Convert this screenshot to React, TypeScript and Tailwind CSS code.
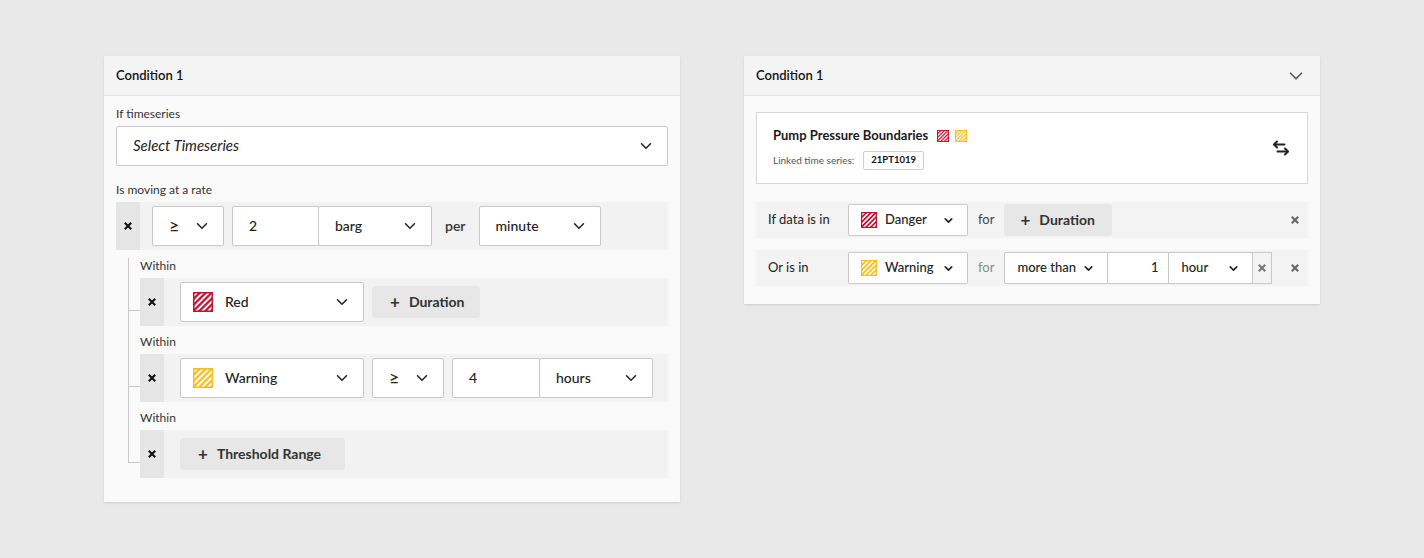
import { ChevronDown } from 'lucide-react';
import type { ReactNode } from 'react';

/* ─── small drawings ─── */

function Hatch({ color, size }: { color: string; size: number }) {
  const id = `hatch-${color.slice(1)}-${size}`;
  return (
    <svg width={size} height={size} viewBox="0 0 20 20" className="shrink-0">
      <defs>
        <pattern id={id} width="4.2" height="4.2" patternUnits="userSpaceOnUse" patternTransform="rotate(45)">
          <rect width="2.4" height="4.2" fill={color} />
          <rect x="2.4" width="1.8" height="4.2" fill="#fff" />
        </pattern>
      </defs>
      <rect width="20" height="20" fill={`url(#${id})`} />
      <rect x="0.75" y="0.75" width="18.5" height="18.5" fill="none" stroke={color} strokeWidth="1.5" />
    </svg>
  );
}

function XMark({ className = '' }: { className?: string }) {
  return (
    <svg width="8" height="8" viewBox="0 0 8 8" className={className}>
      <path d="M1.5 1.5l5 5M6.5 1.5l-5 5" stroke="currentColor" strokeWidth="2" strokeLinecap="square" />
    </svg>
  );
}

function SwapIcon() {
  return (
    <svg width="18" height="18" viewBox="0 0 18 18" fill="none" stroke="#222" strokeWidth="2" strokeLinecap="round" strokeLinejoin="round">
      <path d="M5 2.5 2 5.5l3 3" />
      <path d="M2.5 5.5h10" />
      <path d="M13 9.5l3 3-3 3" />
      <path d="M15.5 12.5h-10" />
    </svg>
  );
}

const RED = '#c8102e';
const YELLOW = '#fbbd1a';

/* ─── form pieces ─── */

function Select({ w, children, swatch, big = true, glyph = false }: { w: string; children: ReactNode; swatch?: string; big?: boolean; glyph?: boolean }) {
  return (
    <div className={`${w} ${big ? 'h-10 px-3' : 'h-8 px-3'} shrink-0 bg-white border border-[#c9c9c9] rounded-[2px] flex items-center`}>
      {swatch && <Hatch color={swatch} size={big ? 20 : 16} />}
      <span
        className={`${swatch ? (big ? 'ml-3' : 'ml-2') : big ? 'pl-1' : ''} flex-1 pb-px ${
          glyph ? 'text-[18px]' : big ? 'text-[14px]' : 'text-[13px]'
        } font-medium text-[#222]`}
      >
        {children}
      </span>
      {big ? (
        <ChevronDown size={18} strokeWidth={2} color="#222" />
      ) : (
        <ChevronDown size={13} strokeWidth={3} color="#222" />
      )}
    </div>
  );
}

function AddButton({ w, label, big = true }: { w: string; label: string; big?: boolean }) {
  return (
    <div className={`${w} h-8 shrink-0 bg-[#e7e7e7] rounded-[3px] flex items-center pb-px ${big ? 'pl-[18px]' : 'pl-[16px]'} text-[14px] font-bold text-[#333]`}>
      <span className="text-[17px] font-bold leading-none mr-[9px]">+</span>
      {label}
    </div>
  );
}

function RowX() {
  return (
    <div className="w-6 self-stretch bg-[#e6e6e6] flex items-center justify-center text-[#111] shrink-0">
      <XMark />
    </div>
  );
}

function Within({ children }: { children: ReactNode }) {
  return (
    <div className="relative">
      <div className="absolute left-[-12px] top-[52px] w-3 h-px bg-[#c8c8c8]" />
      <div className="text-[12px] text-[#333] leading-4 mt-2 mb-1">Within</div>
      <div className="h-12 bg-[#f2f2f2] flex items-center">
        <RowX />
        <div className="flex items-center gap-2 pl-4">{children}</div>
      </div>
    </div>
  );
}

/* ─── cards ─── */

function RateCondition() {
  return (
    <div className="w-[576px] bg-[#fafafa] shadow-[0_1px_2px_rgba(0,0,0,0.12)]">
      <div className="h-10 px-3 flex items-center bg-[#f4f4f4] border-b border-[#e2e2e2] text-[13px] font-semibold text-[#111]">
        Condition 1
      </div>
      <div className="px-3 pt-[10px] pb-6">
        <div className="text-[12px] text-[#333] leading-4 mb-1">If timeseries</div>
        <div className="h-10 bg-white border border-[#c9c9c9] rounded-[2px] flex items-center pl-4 pr-3">
          <span className="flex-1 pb-px italic text-[15px] text-[#222]">Select Timeseries</span>
          <ChevronDown size={18} strokeWidth={2} color="#222" />
        </div>

        <div className="text-[12px] text-[#333] leading-4 mt-4 mb-1">Is moving at a rate</div>
        <div className="h-12 bg-[#f2f2f2] flex items-center">
          <RowX />
          <div className="flex items-center pl-3">
            <Select w="w-[72px]" glyph>≥</Select>
            <div className="ml-2 flex">
              <div className="w-[87px] h-10 pb-px bg-white border border-[#c9c9c9] rounded-l-[2px] flex items-center pl-4 text-[14px] font-medium text-[#222]">2</div>
              <div className="-ml-px">
                <Select w="w-[114px]">barg</Select>
              </div>
            </div>
            <span className="ml-[13px] mr-[13px] pb-px text-[14px] font-semibold text-[#333]">per</span>
            <Select w="w-[122px]">minute</Select>
          </div>
        </div>

        <div className="relative pl-6">
          <div className="absolute left-3 top-0 h-[205px] w-px bg-[#c8c8c8]" />
          <Within>
            <Select w="w-[184px]" swatch={RED}>Red</Select>
            <AddButton w="w-[108px]" label="Duration" />
          </Within>
          <Within>
            <Select w="w-[184px]" swatch={YELLOW}>Warning</Select>
            <Select w="w-[72px]" glyph>≥</Select>
            <div className="flex">
              <div className="w-[88px] h-10 pb-px bg-white border border-[#c9c9c9] rounded-l-[2px] flex items-center pl-4 text-[14px] font-medium text-[#222]">4</div>
              <div className="-ml-px">
                <Select w="w-[114px]">hours</Select>
              </div>
            </div>
          </Within>
          <Within>
            <AddButton w="w-[165px]" label="Threshold Range" />
          </Within>
        </div>
      </div>
    </div>
  );
}

function BoundaryCondition() {
  return (
    <div className="w-[576px] bg-[#fafafa] shadow-[0_1px_2px_rgba(0,0,0,0.12)]">
      <div className="h-10 px-3 flex items-center justify-between bg-[#f4f4f4] border-b border-[#e2e2e2]">
        <span className="text-[13px] font-semibold text-[#111]">Condition 1</span>
        <ChevronDown size={22} strokeWidth={1.8} color="#555" className="mr-px" />
      </div>
      <div className="px-3 pt-4 pb-[18px]">
        <div className="h-[72px] bg-white border border-[#d6d6d6] flex items-center justify-between pl-4 pr-[17px]">
          <div>
            <div className="flex items-center">
              <span className="text-[13px] font-bold text-[#1a1a1a]">Pump Pressure Boundaries</span>
              <span className="ml-[9px]"><Hatch color={RED} size={12} /></span>
              <span className="ml-[6px]"><Hatch color={YELLOW} size={12} /></span>
            </div>
            <div className="flex items-center mt-[5px]">
              <span className="text-[10px] text-[#555]">Linked time series:</span>
              <span className="ml-[9px] h-[19px] px-[7px] border border-[#cfcfcf] rounded-[2px] flex items-center text-[9.5px] font-bold text-[#111]">
                21PT1019
              </span>
            </div>
          </div>
          <SwapIcon />
        </div>

        <div className="mt-[18px] h-9 bg-[#f3f3f3] flex items-center pl-3">
          <span className="w-20 text-[13px] text-[#222]">If data is in</span>
          <Select w="w-[120px]" swatch={RED} big={false}>Danger</Select>
          <span className="ml-[10px] mr-[10px] text-[13px] text-[#444]">for</span>
          <AddButton w="w-[108px]" label="Duration" big={false} />
          <div className="flex-1" />
          <XMark className="mr-[9px] text-[#666]" />
        </div>

        <div className="mt-3 h-9 bg-[#f3f3f3] flex items-center pl-3">
          <span className="w-20 text-[13px] text-[#222]">Or is in</span>
          <Select w="w-[120px]" swatch={YELLOW} big={false}>Warning</Select>
          <span className="ml-[10px] mr-[10px] text-[13px] text-[#8a8a8a]">for</span>
          <div className="flex">
            <Select w="w-[104px]" big={false}>more than</Select>
            <div className="-ml-px w-[62px] h-8 pb-px bg-white border border-[#c9c9c9] flex items-center justify-end pr-[10px] text-[13px] font-medium text-[#222]">
              1
            </div>
            <div className="-ml-px">
              <Select w="w-[85px]" big={false}>hour</Select>
            </div>
            <div className="-ml-px w-[20px] h-8 bg-[#f3f3f3] border border-[#c9c9c9] flex items-center justify-center text-[#777]">
              <XMark />
            </div>
          </div>
          <div className="flex-1" />
          <XMark className="mr-[9px] text-[#666]" />
        </div>
      </div>
    </div>
  );
}

export default function App() {
  return (
    <div className="min-h-[558px] w-full bg-[#e9e9e9] pt-[56px] pl-[104px] flex items-start gap-16 font-['Lato','Open_Sans',sans-serif]">
      <RateCondition />
      <BoundaryCondition />
    </div>
  );
}
